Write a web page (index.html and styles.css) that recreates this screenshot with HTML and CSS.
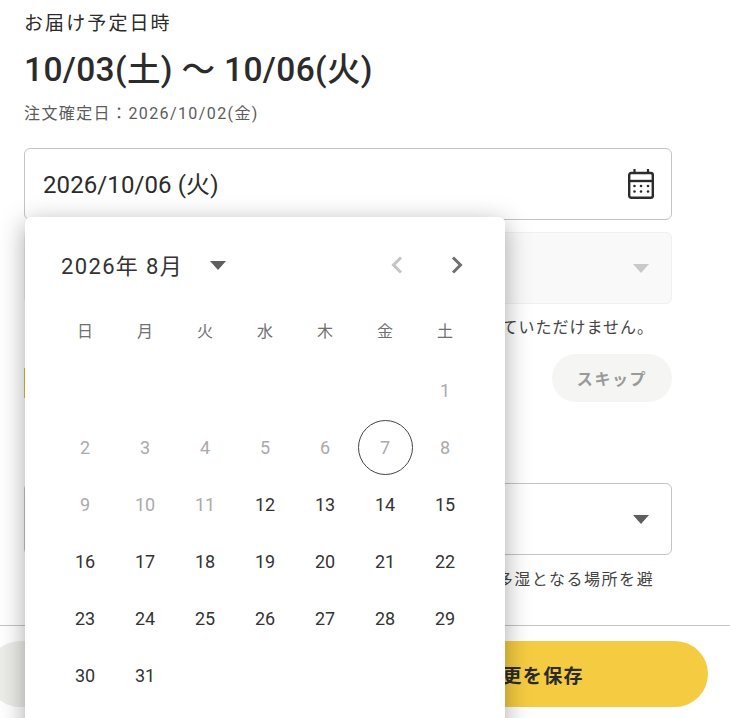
FILE: index.html
```html
<!DOCTYPE html>
<html lang="ja">
<head>
    <meta charset="UTF-8">
    <title>お届け予定日時</title>
    <link rel="stylesheet" href="styles.css">
</head>
<body>
    <div class="page">
        <div class="content">
            <p class="label">お届け予定日時</p>
            <h1 class="range">10/03(土) 〜 10/06(火)</h1>
            <p class="sub">注文確定日：2026/10/02(金)</p>

            <div class="field date-field">
                <span class="field-value">2026/10/06 (火)</span>
                <svg class="cal-icon" width="26" height="30" viewBox="0 0 26 30" fill="none">
                    <rect x="1.2" y="4" width="23.6" height="24.8" rx="2" stroke="#2b2b2b" stroke-width="2.4"/>
                    <path d="M1 12h24" stroke="#2b2b2b" stroke-width="2.4"/>
                    <path d="M6.5 0v4M20 0v4" stroke="#2b2b2b" stroke-width="2.2"/>
                    <g fill="#2b2b2b">
                        <circle cx="6.5" cy="17" r="1.3"/>
                        <circle cx="13" cy="17" r="1.3"/>
                        <circle cx="20" cy="17" r="1.3"/>
                        <circle cx="6.5" cy="22.5" r="1.3"/>
                        <circle cx="13" cy="22.5" r="1.3"/>
                        <circle cx="20" cy="22.5" r="1.3"/>
                    </g>
                </svg>
            </div>

            <div class="field time-field">
                <span class="caret caret-off"></span>
            </div>
            <p class="note note-time">選択された日時は配送の都合により、お届け時間帯の指定をしていただけません。</p>

            <div class="skip-row">
                <div class="notice"></div>
                <button class="skip">スキップ</button>
            </div>

            <div class="field place-field">
                <span class="caret"></span>
            </div>
            <p class="note note-place">※冷蔵品を除き、置き配の場合は玄関先でも直射日光や高温多湿となる場所を避</p>
        </div>

        <div class="footer">
            <button class="btn btn-cancel">キャンセル</button>
            <button class="btn btn-save">変更を保存</button>
        </div>

        <div class="picker">
            <div class="picker-head">
                <span class="month">2026年 8月</span>
                <span class="caret"></span>
                <div class="arrows">
                    <svg class="arrow" width="12" height="18" viewBox="0 0 12 18" fill="none">
                        <path d="M10 1.5L2.5 9l7.5 7.5" stroke="#c4c4c4" stroke-width="3"/>
                    </svg>
                    <svg class="arrow" width="12" height="18" viewBox="0 0 12 18" fill="none">
                        <path d="M2 1.5L9.5 9 2 16.5" stroke="#707070" stroke-width="3"/>
                    </svg>
                </div>
            </div>
            <div class="cal-grid">
                <div class="wd">日</div><div class="wd">月</div><div class="wd">火</div><div class="wd">水</div><div class="wd">木</div><div class="wd">金</div><div class="wd">土</div>

                <div></div><div></div><div></div><div></div><div></div><div></div><div class="day off">1</div>
                <div class="day off">2</div><div class="day off">3</div><div class="day off">4</div><div class="day off">5</div><div class="day off">6</div><div class="day off today"><span>7</span></div><div class="day off">8</div>
                <div class="day off">9</div><div class="day off">10</div><div class="day off">11</div><div class="day">12</div><div class="day">13</div><div class="day">14</div><div class="day">15</div>
                <div class="day">16</div><div class="day">17</div><div class="day">18</div><div class="day">19</div><div class="day">20</div><div class="day">21</div><div class="day">22</div>
                <div class="day">23</div><div class="day">24</div><div class="day">25</div><div class="day">26</div><div class="day">27</div><div class="day">28</div><div class="day">29</div>
                <div class="day">30</div><div class="day">31</div>
            </div>
        </div>
    </div>
</body>
</html>
```

FILE: styles.css
```css
* {
    box-sizing: border-box;
}
html, body {
    margin: 0;
    height: 100%;
    overflow: hidden;
    background: #fff;
}
body {
    font-family: Roboto, "Noto Sans CJK JP", sans-serif;
    color: #2b2b2b;
}
.page {
    position: relative;
    height: 718px;
    overflow: hidden;
}
.content {
    width: 672px;
    height: 625px;
    padding: 12px 0 0 24px;
}
.label {
    margin: 0;
    font-size: 19px;
    line-height: 24px;
    letter-spacing: 2.1px;
}
.range {
    margin: 12px 0 0;
    font-size: 33.5px;
    font-weight: 500;
    line-height: 44px;
    letter-spacing: 0.35px;
}
.sub {
    margin: 10px 0 0;
    font-size: 16px;
    line-height: 24px;
    letter-spacing: 1.4px;
    color: #5c5c5c;
}
.field {
    display: flex;
    align-items: center;
    justify-content: space-between;
    height: 72px;
    padding: 0 17px 0 18px;
    border: 1px solid #c4c4c4;
    border-radius: 6px;
}
.date-field {
    margin-top: 22px;
}
.field-value {
    margin-bottom: 3px;
    font-size: 24px;
    letter-spacing: 0.1px;
}
.time-field {
    margin-top: 12px;
    justify-content: flex-end;
    padding-right: 22px;
    background: #f9f9f9;
    border-color: #f0f0f0;
}
.note {
    margin: 12px 0 0;
    font-size: 16px;
    line-height: 24px;
    letter-spacing: 1px;
    color: #444;
    white-space: nowrap;
}
.note-time {
    padding-left: 3px;
}
.skip-row {
    display: flex;
    align-items: center;
    justify-content: space-between;
    margin-top: 14px;
    height: 48px;
}
.notice {
    width: 2px;
    height: 30px;
    margin-top: 10px;
    background: #e8bd3a;
}
.skip {
    width: 120px;
    height: 48px;
    border: 0;
    border-radius: 24px;
    background: #f5f5f3;
    color: #9a9a9a;
    font-family: inherit;
    font-size: 16px;
    font-weight: 700;
    letter-spacing: 1.6px;
}
.place-field {
    margin-top: 81px;
    justify-content: flex-end;
    padding-right: 22px;
}
.note-place {
    margin-top: 13px;
    letter-spacing: 1.55px;
}
.caret {
    width: 0;
    height: 0;
    border-left: 8px solid transparent;
    border-right: 8px solid transparent;
    border-top: 9px solid #5e5e5e;
}
.caret-off {
    border-top-color: #c9c9c9;
}
.footer {
    display: flex;
    justify-content: space-between;
    width: 743px;
    margin-left: -13px;
    padding: 15px 22px 0 0;
    border-top: 1px solid #c4c4c4;
}
.btn {
    height: 66px;
    border: 0;
    border-radius: 33px;
    font-family: inherit;
    font-size: 19px;
    font-weight: 700;
    letter-spacing: 1.3px;
    color: #2b2b2b;
}
.btn-cancel {
    width: 300px;
    background: #ecece8;
}
.btn-save {
    width: 350px;
    background: #f5cc41;
}
.picker {
    position: absolute;
    left: 25px;
    top: 217px;
    width: 480px;
    height: 540px;
    padding: 0 30px;
    background: #fff;
    border-radius: 6px;
    box-shadow: 0 6px 26px rgba(0, 0, 0, 0.34);
}
.picker-head {
    display: flex;
    align-items: center;
    height: 96px;
    padding-left: 6px;
}
.month {
    margin-bottom: 3px;
    font-size: 22px;
    letter-spacing: 1.35px;
    color: #333;
}
.picker-head .caret {
    margin-left: 27px;
}
.arrows {
    display: flex;
    gap: 48px;
    margin-left: auto;
    margin-right: 12px;
}
.cal-grid {
    display: grid;
    grid-template-columns: repeat(7, 60px);
    grid-template-rows: 49px;
    grid-auto-rows: 57px;
}
.wd {
    display: flex;
    align-items: center;
    justify-content: center;
    height: 34px;
    font-size: 16px;
    color: #707070;
}
.day {
    display: flex;
    align-items: center;
    justify-content: center;
    font-size: 18px;
    color: #333;
}
.off {
    color: #aaa;
}
.today span {
    display: flex;
    align-items: center;
    justify-content: center;
    width: 55px;
    height: 55px;
    border: 1px solid #444;
    border-radius: 50%;
}
```
